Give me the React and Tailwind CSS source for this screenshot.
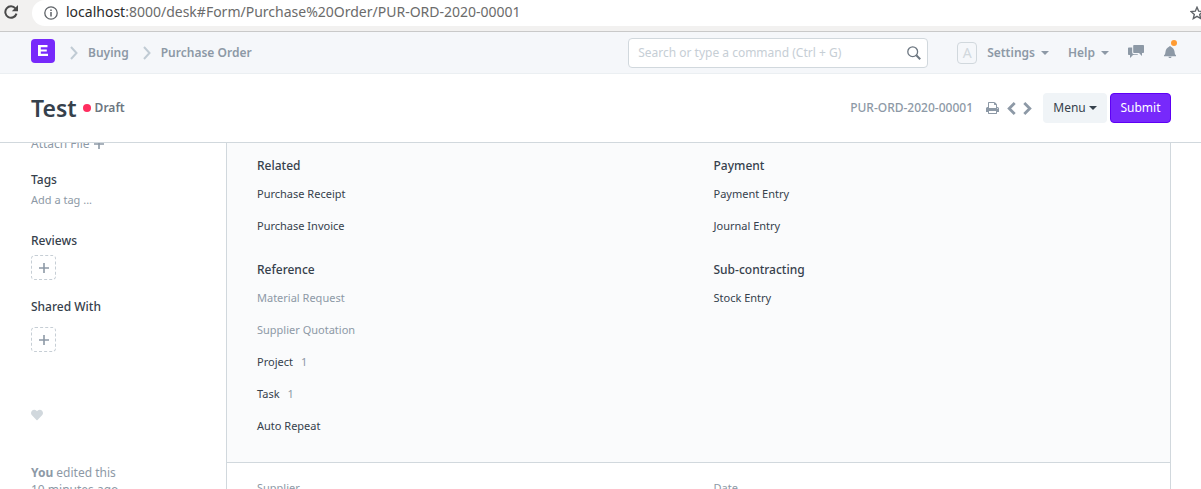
import React from "react";
import { FaHeart } from "react-icons/fa";

const Chevron = () => (
  <svg width="8" height="14" viewBox="0 0 8 14" fill="none" stroke="#c0cbd4" strokeWidth="2" aria-hidden="true">
    <path d="M1 1l5.500 6L1 13" />
  </svg>
);

const Caret = () => (
  <svg width="8" height="4" viewBox="0 0 8 4" fill="currentColor" aria-hidden="true">
    <path d="M0 0h8L4 4z" />
  </svg>
);

const Plus = () => (
  <svg width="10" height="10" viewBox="0 0 10 10" fill="none" stroke="currentColor" strokeWidth="1.600" aria-hidden="true">
    <path d="M5 0v10M0 5h10" />
  </svg>
);

function BrowserBar() {
  return (
    <div className="flex h-8 shrink-0 items-start border-b border-[#c9c9c9] bg-[#f2f1f0]">
      <button aria-label="Reload" className="mt-[5px] ml-1 shrink-0">
        <svg width="14" height="14" viewBox="0 0 14 14" fill="none" stroke="#4a4a4a" strokeWidth="2" aria-hidden="true">
          <path d="M11.500 3.500A5.700 5.700 0 1 0 12.500 8.600" />
          <path d="M14 0v6.200H7.800z" fill="#4a4a4a" stroke="none" />
        </svg>
      </button>
      <div className="ml-3.5 flex h-[26px] min-w-0 flex-1 items-center rounded-l-full bg-white pl-3">
        <svg width="14" height="14" viewBox="0 0 14 14" fill="none" stroke="#5f6368" aria-hidden="true" className="shrink-0">
          <circle cx="7" cy="7" r="6.200" strokeWidth="1.300" />
          <path d="M7 6v4.500M7 3.500v1.500" strokeWidth="1.500" />
        </svg>
        <span className="mb-0.5 ml-2 flex-1 truncate text-[14px] leading-5 text-[#6b6b6b]">
          <span className="text-[#2b2b2b]">localhost</span>:8000/desk#Form/Purchase%20Order/PUR-ORD-2020-00001
        </span>
        <div className="flex w-[11px] shrink-0 overflow-hidden">
          <svg width="14" height="14" viewBox="0 0 14 14" fill="none" stroke="#5f6368" strokeWidth="1.400" className="shrink-0" aria-label="Bookmark">
            <path d="M7 1.300l1.700 3.900 4.200.4-3.200 2.800 1 4.200L7 10.400l-3.700 2.200 1-4.200L1.100 5.600l4.200-.4z" />
          </svg>
        </div>
      </div>
    </div>
  );
}

function Navbar() {
  return (
    <nav className="flex h-[42px] shrink-0 items-center border-b border-[#ebeff2] bg-[#f5f7fa] pr-[25px] pl-[31px] font-semibold text-[#8d99a6]">
      <a href="#home" aria-label="Home" className="mb-1 flex size-6 items-center justify-center rounded bg-[#7729fb]">
        <svg width="10" height="11" viewBox="0 0 10 11" fill="#fff" aria-hidden="true">
          <path d="M0 0h9.500v2.200H2.800v2.200h6v2.200h-6v2.200H10V11H0z" />
        </svg>
      </a>
      <span className="ml-[15px]"><Chevron /></span>
      <a href="#buying" className="ml-2.5">Buying</a>
      <span className="ml-3.5"><Chevron /></span>
      <a href="#purchase-order" className="ml-2.5">Purchase Order</a>
      <div className="ml-auto flex h-[30px] w-[300px] items-center rounded border border-[#d1d8dd] bg-white pr-1.5 pl-[9px]">
        <input
          aria-label="Search"
          placeholder="Search or type a command (Ctrl + G)"
          className="min-w-0 flex-1 bg-transparent font-normal outline-none placeholder:text-[#c6ced5]"
        />
        <svg width="14" height="14" viewBox="0 0 14 14" fill="none" stroke="#6c7680" aria-hidden="true">
          <circle cx="5.700" cy="5.700" r="4.900" strokeWidth="1.300" />
          <path d="M9.300 9.300L13.200 13.200" strokeWidth="2" />
        </svg>
      </div>
      <div className="ml-[29px] flex h-[22px] w-5 items-center justify-center rounded border border-[#d1d8dd] text-[14px] font-normal text-[#d1d8dd]">A</div>
      <button className="ml-2.5 flex items-center gap-1.5">Settings <Caret /></button>
      <button className="ml-[19px] flex items-center gap-1.5">Help <Caret /></button>
      <button aria-label="Chat" className="mb-0.5 ml-[19px]">
        <svg width="16" height="13" viewBox="0 0 16 13" fill="currentColor" aria-hidden="true">
          <path d="M6 0h9.200q.8 0 .8.800v6.400q0 .8-.8.800H14v3L11 8H6q-.8 0-.8-.8V.8Q5.200 0 6 0z" />
          <path d="M4.200 2.500H.8q-.8 0-.8.800v5.900q0 .8.800.8H2v3l3-3h4.200q.8 0 .8-.8H6q-1.800 0-1.800-1.800z" />
        </svg>
      </button>
      <button aria-label="Notifications" className="relative mb-0.5 ml-5">
        <svg width="12" height="13" viewBox="0 0 14 15" fill="currentColor" aria-hidden="true">
          <path d="M14 12v1H0v-1l.73-.58c.77-.77.81-2.550 1.190-4.420C2.690 3.230 6 2 6 2c0-.55.45-1 1-1s1 .45 1 1c0 0 3.390 1.230 4.160 5 .38 1.880.42 3.660 1.190 4.420l.66.58zM7 15c.9 0 1.700-.6 1.900-1.500H5.100C5.300 14.400 6.100 15 7 15z" />
        </svg>
        <span className="absolute -top-[5px] -right-[1px] size-1.5 rounded-full bg-[#ff9c33]" />
      </button>
    </nav>
  );
}

function PageHead() {
  return (
    <header className="flex h-[69px] shrink-0 items-center border-b border-[#d1d8dd] bg-white pr-[30px] pl-[31px] text-[#8d99a6]">
      <h1 className="text-[23px] leading-8 font-semibold text-[#36414c]">Test</h1>
      <span className="ml-1.5 size-2 rounded-full bg-[#ff2e5f]" />
      <span className="ml-1 font-semibold text-[#6c7680]">Draft</span>
      <span className="ml-auto font-medium">PUR-ORD-2020-00001</span>
      <button aria-label="Print" className="ml-[13px]">
        <svg width="13" height="14" viewBox="0 0 1664 1792" fill="currentColor" aria-hidden="true">
          <path d="M384 1536h896v-256H384v256zm0-640h896V512h-160q-40 0-68-28t-28-68V256H384v640zm1152 64q0-26-19-45t-45-19-45 19-19 45 19 45 45 19 45-19 19-45zm128 0v416q0 13-9.500 22.500t-22.500 9.500h-224v160q0 40-28 68t-68 28H352q-40 0-68-28t-28-68v-160H32q-13 0-22.500-9.500T0 1376V960q0-79 56.500-135.500T192 768h64V224q0-40 28-68t68-28h672q40 0 88 20t76 48l152 152q28 28 48 76t20 88v256h64q79 0 135.500 56.500T1664 960z" />
        </svg>
      </button>
      <button aria-label="Previous" className="ml-2">
        <svg width="9" height="13" viewBox="0 0 9 13" fill="none" stroke="currentColor" strokeWidth="2.800" aria-hidden="true">
          <path d="M7.700 1L2.200 6.500l5.500 5.500" />
        </svg>
      </button>
      <button aria-label="Next" className="ml-[7px]">
        <svg width="9" height="13" viewBox="0 0 9 13" fill="none" stroke="currentColor" strokeWidth="2.800" aria-hidden="true">
          <path d="M1.300 1l5.500 5.500-5.500 5.500" />
        </svg>
      </button>
      <button className="ml-[11px] flex h-[30px] w-16 items-center justify-center gap-[3px] rounded bg-[#f0f4f7] text-[#36414c]">
        Menu <Caret />
      </button>
      <button className="ml-[3px] h-[30px] w-[61px] rounded border border-[#5e00f5] bg-[#7729fb] text-white">Submit</button>
    </header>
  );
}

const AddBox = ({ label }) => (
  <button aria-label={label} className="flex size-[25px] items-center justify-center rounded border border-dashed border-[#c6ced5] text-[#8d99a6]">
    <Plus />
  </button>
);

function Sidebar() {
  return (
    <aside className="-mt-[9px] w-[196px] shrink-0 pl-px leading-5 text-[#8d99a6]">
      <button className="flex items-center gap-1">Attach File <Plus /></button>
      <h2 className="mt-4 font-medium text-[#36414c]">Tags</h2>
      <button className="block text-[11px]">Add a tag ...</button>
      <h2 className="mt-[21px] mb-1 font-medium text-[#36414c]">Reviews</h2>
      <AddBox label="Add review" />
      <h2 className="mt-[17px] mb-2.5 font-medium text-[#36414c]">Shared With</h2>
      <AddBox label="Share" />
      <button aria-label="Like" className="mt-[57px] block text-[#d1d8dd]"><FaHeart size={12} /></button>
      <p className="mt-[43px] leading-[17px]">
        <b className="font-bold">You</b> edited this
        <br />
        10 minutes ago
      </p>
    </aside>
  );
}

const groups = [
  { title: "Related", items: [["Purchase Receipt"], ["Purchase Invoice"]] },
  { title: "Payment", items: [["Payment Entry"], ["Journal Entry"]] },
  {
    title: "Reference",
    items: [["Material Request", null, true], ["Supplier Quotation", null, true], ["Project", 1], ["Task", 1], ["Auto Repeat"]],
  },
  { title: "Sub-contracting", items: [["Stock Entry"]] },
];

function LinkGroup({ title, items }) {
  return (
    <section className="px-[15px]">
      <h2 className="mb-0.5 leading-[21px] font-medium text-[#36414c]">{title}</h2>
      <ul>
        {items.map(([name, count, muted]) => (
          <li key={name} className="flex h-8 items-center gap-2 text-[11px] text-[#8d99a6]">
            <a href="#link" className={muted ? "text-[#8d99a6]" : "text-[#36414c]"}>{name}</a>
            {count && <span>{count}</span>}
          </li>
        ))}
      </ul>
    </section>
  );
}

function FormPanel() {
  return (
    <main className="min-w-0 flex-1 border-x border-[#d1d8dd]">
      <div className="grid grid-cols-2 gap-y-[17px] border-b border-[#d1d8dd] bg-[#fafbfc] px-[15px] pt-3 pb-5">
        {groups.map((g) => <LinkGroup key={g.title} {...g} />)}
      </div>
      <div className="grid grid-cols-2 px-[15px] pt-[15px] text-[11px] leading-5 text-[#8d99a6]">
        <span className="px-[15px]">Supplier</span>
        <span className="px-[15px]">Date</span>
      </div>
    </main>
  );
}

export default function App() {
  return (
    <div className="flex h-screen flex-col overflow-hidden bg-white font-['Noto_Sans','Open_Sans',sans-serif] text-[12px]">
      <BrowserBar />
      <Navbar />
      <PageHead />
      <div className="flex min-h-0 flex-1 overflow-hidden px-[30px]">
        <Sidebar />
        <FormPanel />
      </div>
    </div>
  );
}
